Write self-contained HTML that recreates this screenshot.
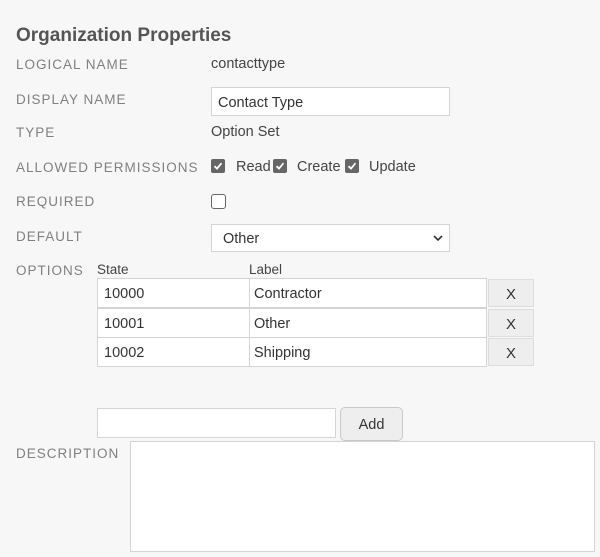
<!DOCTYPE html>
<html><head><style>
*{box-sizing:border-box;margin:0;padding:0}
body{width:600px;height:557px;background:#f7f7f7;font-family:"Liberation Sans",sans-serif;position:relative;overflow:hidden;color:#333}
.a{position:absolute;white-space:nowrap}
.t{font-size:19px;font-weight:bold;color:#555;left:16px;top:25px}
.l{font-size:13.5px;color:#808080;letter-spacing:1px;left:16px}
.v{font-size:14.5px;color:#444;left:211px}
.box{position:absolute;background:#fff;border:1px solid #d4d4d4;font-size:14.5px;color:#333;padding-left:6px;padding-top:2px;display:flex;align-items:center}
.cb{position:absolute;width:14px;height:14px;background:#666;border-radius:2px}
.cb svg{position:absolute;left:2px;top:2px}
.x{position:absolute;background:#eee;border:1px solid #ddd;font-size:15px;color:#333;display:flex;align-items:center;justify-content:center;padding-top:2px}
</style></head><body>
<div class="a t">Organization Properties</div>
<div class="a l" style="top:57px">LOGICAL NAME</div>
<div class="a v" style="top:56px">contacttype</div>
<div class="a l" style="top:92px">DISPLAY NAME</div>
<div class="box" style="left:211px;top:87px;width:239px;height:29px">Contact Type</div>
<div class="a l" style="top:125px">TYPE</div>
<div class="a v" style="top:124px">Option Set</div>
<div class="a l" style="top:160px">ALLOWED PERMISSIONS</div>
<div class="cb" style="left:211px;top:159px"><svg width="10" height="10" viewBox="0 0 10 10"><path d="M1.5 5.2 L4 7.6 L8.5 2.2" stroke="#fff" stroke-width="1.8" fill="none"/></svg></div>
<div class="a v" style="left:236px;top:159px">Read</div>
<div class="cb" style="left:273px;top:159px"><svg width="10" height="10" viewBox="0 0 10 10"><path d="M1.5 5.2 L4 7.6 L8.5 2.2" stroke="#fff" stroke-width="1.8" fill="none"/></svg></div>
<div class="a v" style="left:297px;top:159px">Create</div>
<div class="cb" style="left:345px;top:159px"><svg width="10" height="10" viewBox="0 0 10 10"><path d="M1.5 5.2 L4 7.6 L8.5 2.2" stroke="#fff" stroke-width="1.8" fill="none"/></svg></div>
<div class="a v" style="left:369px;top:159px">Update</div>
<div class="a l" style="top:194px">REQUIRED</div>
<div style="position:absolute;left:211px;top:194px;width:15px;height:15px;border:1.5px solid #666;border-radius:3px;background:#fff"></div>
<div class="a l" style="top:229px">DEFAULT</div>
<div class="box" style="left:211px;top:224px;width:239px;height:28px;padding-left:11px">Other
<svg style="position:absolute;right:6px;top:10px" width="10" height="7" viewBox="0 0 10 7"><path d="M1 1 L5 5 L9 1" stroke="#333" stroke-width="1.6" fill="none"/></svg></div>
<div class="a l" style="top:263px">OPTIONS</div>
<div class="a v" style="left:97px;top:262px;font-size:13.5px">State</div>
<div class="a v" style="left:249px;top:262px;font-size:13.5px">Label</div>
<div class="box" style="left:97px;top:278px;width:153px;height:30px">10000</div>
<div class="box" style="left:249px;top:278px;width:238px;height:30px;padding-left:4px">Contractor</div>
<div class="x" style="left:488px;top:279px;width:46px;height:28px">X</div>
<div class="box" style="left:97px;top:308px;width:153px;height:30px">10001</div>
<div class="box" style="left:249px;top:308px;width:238px;height:30px;padding-left:4px">Other</div>
<div class="x" style="left:488px;top:309px;width:46px;height:28px">X</div>
<div class="box" style="left:97px;top:337px;width:153px;height:30px">10002</div>
<div class="box" style="left:249px;top:337px;width:238px;height:30px;padding-left:4px">Shipping</div>
<div class="x" style="left:488px;top:338px;width:46px;height:28px">X</div>
<div class="box" style="left:97px;top:408px;width:239px;height:30px"></div>
<div class="x" style="left:340px;top:407px;width:63px;height:34px;border-radius:5px;border:1px solid #c8c8c8;font-size:14.5px">Add</div>
<div class="a l" style="top:446px">DESCRIPTION</div>
<div class="box" style="left:130px;top:441px;width:465px;height:111px"></div>
</body></html>
